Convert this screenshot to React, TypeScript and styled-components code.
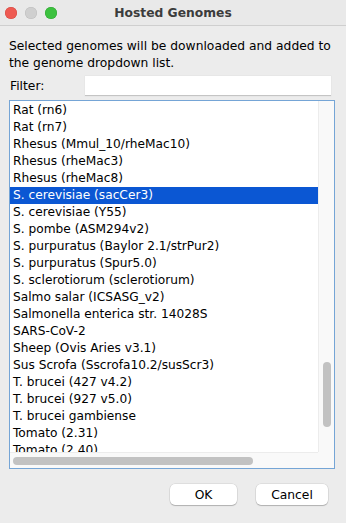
import React from "react";
import styled, { createGlobalStyle } from "styled-components";

const Global = createGlobalStyle`
  html, body { margin: 0; padding: 0; background: #ececec; }
  body { width: 346px; height: 523px; overflow: hidden; font-family: "DejaVu Sans", "Liberation Sans", sans-serif; }
`;

const Window = styled.div`
  width: 346px;
  height: 523px;
  display: flex;
  flex-direction: column;
  background: #ececec;
  color: #000;
`;

const TitleBar = styled.div`
  height: 25px;
  flex: none;
  display: grid;
  grid-template-columns: 70px 1fr 70px;
  align-items: center;
  background: #e9e9e9;
  border-bottom: 1px solid #cfcfcf;
`;

const Lights = styled.div`
  display: flex;
  gap: 8px;
  padding-left: 5px;
`;

const Light = styled.span<{ $c: string; $b: string }>`
  width: 12px;
  height: 12px;
  border-radius: 50%;
  background: ${(p) => p.$c};
  box-shadow: inset 0 0 0 0.5px ${(p) => p.$b};
`;

const Title = styled.div`
  text-align: center;
  font-weight: bold;
  font-size: 12.3px;
  color: #3c3c3c;
`;

const Body = styled.div`
  flex: 1;
  display: flex;
  flex-direction: column;
  padding: 12px 11px 0 9px;
`;

const Description = styled.p`
  margin: 0;
  font-size: 12.3px;
  line-height: 17px;
`;

const FilterRow = styled.div`
  display: flex;
  align-items: center;
  margin-top: 3px;
  height: 21px;
`;

const FilterLabel = styled.span`
  width: 75px;
  padding-left: 1px;
  font-size: 12.3px;
`;

const FilterInput = styled.div`
  width: 246px;
  height: 19px;
  background: #fff;
  border-bottom: 1px solid #c4c4c4;
  box-shadow: 0 0 0 0.5px #e2e2e2;
`;

const ListBox = styled.div`
  margin-top: 4px;
  width: 324px;
  height: 367px;
  border: 1px solid #75a5d6;
  background: #fff;
  display: grid;
  grid-template-columns: 1fr 16px;
  grid-template-rows: 1fr 16px;
  overflow: hidden;
`;

const Rows = styled.div`
  overflow: hidden;
  padding-top: 1px;
`;

const Row = styled.div<{ $sel?: boolean }>`
  height: 17px;
  line-height: 17px;
  padding-left: 3px;
  font-size: 12.2px;
  white-space: nowrap;
  background: ${(p) => (p.$sel ? "#0b57d3" : "transparent")};
  color: ${(p) => (p.$sel ? "#fff" : "#000")};
`;

const VTrack = styled.div`
  background: #f9f9f9;
  border-left: 1px solid #ececec;
  display: flex;
  flex-direction: column;
  align-items: center;
  padding-top: 261px;
`;

const VThumb = styled.div`
  width: 8px;
  height: 65px;
  border-radius: 4px;
  background: #c2c2c2;
`;

const HTrack = styled.div`
  background: #f9f9f9;
  border-top: 1px solid #ececec;
  display: flex;
  align-items: center;
  padding-left: 3px;
`;

const HThumb = styled.div`
  width: 240px;
  height: 8px;
  border-radius: 4px;
  background: #c2c2c2;
`;

const Corner = styled.div`
  background: #f9f9f9;
`;

const Buttons = styled.div`
  display: flex;
  justify-content: flex-end;
  gap: 19px;
  margin-top: 15px;
  padding-right: 7px;
`;

const Button = styled.button<{ $w: number }>`
  width: ${(p) => p.$w}px;
  height: 21px;
  border: none;
  border-radius: 5px;
  background: #fff;
  box-shadow: 0 0 0 0.5px rgba(0, 0, 0, 0.12), 0 1px 1px rgba(0, 0, 0, 0.2);
  font-family: "DejaVu Sans", "Liberation Sans", sans-serif;
  font-size: 12.3px;
  color: #000;
  padding: 0;
`;

const items = [
  "Rat (rn6)",
  "Rat (rn7)",
  "Rhesus (Mmul_10/rheMac10)",
  "Rhesus (rheMac3)",
  "Rhesus (rheMac8)",
  "S. cerevisiae (sacCer3)",
  "S. cerevisiae (Y55)",
  "S. pombe (ASM294v2)",
  "S. purpuratus (Baylor 2.1/strPur2)",
  "S. purpuratus (Spur5.0)",
  "S. sclerotiorum (sclerotiorum)",
  "Salmo salar (ICSASG_v2)",
  "Salmonella enterica str. 14028S",
  "SARS-CoV-2",
  "Sheep (Ovis Aries v3.1)",
  "Sus Scrofa (Sscrofa10.2/susScr3)",
  "T. brucei (427 v4.2)",
  "T. brucei (927 v5.0)",
  "T. brucei gambiense",
  "Tomato (2.31)",
  "Tomato (2.40)",
];

export default function App() {
  return (
    <>
      <Global />
      <Window>
        <TitleBar>
          <Lights>
            <Light $c="#ee5a52" $b="#d24a42" />
            <Light $c="#cfcfcf" $b="#bdbdbd" />
            <Light $c="#3cc13f" $b="#2fa532" />
          </Lights>
          <Title>Hosted Genomes</Title>
          <span />
        </TitleBar>
        <Body>
          <Description>
            Selected genomes will be downloaded and added to
            <br />
            the genome dropdown list.
          </Description>
          <FilterRow>
            <FilterLabel>Filter:</FilterLabel>
            <FilterInput />
          </FilterRow>
          <ListBox>
            <Rows>
              {items.map((it) => (
                <Row key={it} $sel={it === "S. cerevisiae (sacCer3)"}>
                  {it}
                </Row>
              ))}
            </Rows>
            <VTrack>
              <VThumb />
            </VTrack>
            <HTrack>
              <HThumb />
            </HTrack>
            <Corner />
          </ListBox>
          <Buttons>
            <Button $w={67}>OK</Button>
            <Button $w={72}>Cancel</Button>
          </Buttons>
        </Body>
      </Window>
    </>
  );
}
